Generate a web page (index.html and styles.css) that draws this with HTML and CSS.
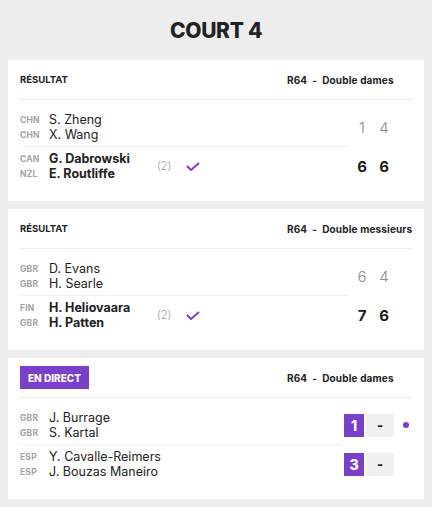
FILE: index.html
```html
<!DOCTYPE html>
<html lang="fr">
<head>
<meta charset="utf-8">
<title>Court 4</title>
<link rel="stylesheet" href="styles.css">
</head>
<body>
<main class="court">
  <h1 class="court-title">COURT 4</h1>

  <section class="match-card">
    <header class="card-head">
      <span class="status">RÉSULTAT</span>
      <span class="round">R64&nbsp;&nbsp;-&nbsp;&nbsp;Double dames</span>
    </header>
    <div class="team-row first">
      <div class="team">
        <div class="players">
          <div class="player"><span class="nat">CHN</span><span class="name">S. Zheng</span></div>
          <div class="player"><span class="nat">CHN</span><span class="name">X. Wang</span></div>
        </div>
      </div>
      <div class="scores"><span class="set">1</span><span class="set">4</span></div>
    </div>
    <div class="team-row winner">
      <div class="team">
        <div class="players">
          <div class="player"><span class="nat">CAN</span><span class="name">G. Dabrowski</span></div>
          <div class="player"><span class="nat">NZL</span><span class="name">E. Routliffe</span></div>
        </div>
        <span class="seed">(2)</span>
        <svg class="check" width="14" height="9" viewBox="0 0 14 9"><polyline points="1,4 5,8 13,1" fill="none" stroke="#7b40c9" stroke-width="2"/></svg>
      </div>
      <div class="scores"><span class="set">6</span><span class="set">6</span></div>
    </div>
  </section>

  <section class="match-card">
    <header class="card-head">
      <span class="status">RÉSULTAT</span>
      <span class="round">R64&nbsp;&nbsp;-&nbsp;&nbsp;Double messieurs</span>
    </header>
    <div class="team-row first">
      <div class="team">
        <div class="players">
          <div class="player"><span class="nat">GBR</span><span class="name">D. Evans</span></div>
          <div class="player"><span class="nat">GBR</span><span class="name">H. Searle</span></div>
        </div>
      </div>
      <div class="scores"><span class="set">6</span><span class="set">4</span></div>
    </div>
    <div class="team-row winner">
      <div class="team">
        <div class="players">
          <div class="player"><span class="nat">FIN</span><span class="name">H. Heliovaara</span></div>
          <div class="player"><span class="nat">GBR</span><span class="name">H. Patten</span></div>
        </div>
        <span class="seed">(2)</span>
        <svg class="check" width="14" height="9" viewBox="0 0 14 9"><polyline points="1,4 5,8 13,1" fill="none" stroke="#7b40c9" stroke-width="2"/></svg>
      </div>
      <div class="scores"><span class="set">7</span><span class="set">6</span></div>
    </div>
  </section>

  <section class="match-card live">
    <header class="card-head">
      <span class="status"><span class="live-badge">EN DIRECT</span></span>
      <span class="round">R64&nbsp;&nbsp;-&nbsp;&nbsp;Double dames</span>
    </header>
    <div class="team-row first">
      <div class="team">
        <div class="players">
          <div class="player"><span class="nat">GBR</span><span class="name">J. Burrage</span></div>
          <div class="player"><span class="nat">GBR</span><span class="name">S. Kartal</span></div>
        </div>
      </div>
      <div class="live-scores">
        <span class="box-set">1</span><span class="box-game">-</span><span class="serve-dot"></span>
      </div>
    </div>
    <div class="team-row">
      <div class="team">
        <div class="players">
          <div class="player"><span class="nat">ESP</span><span class="name">Y. Cavalle-Reimers</span></div>
          <div class="player"><span class="nat">ESP</span><span class="name">J. Bouzas Maneiro</span></div>
        </div>
      </div>
      <div class="live-scores">
        <span class="box-set">3</span><span class="box-game">-</span>
      </div>
    </div>
  </section>
</main>
</body>
</html>
```

FILE: styles.css
```css
* { box-sizing: border-box; }

body {
  margin: 0;
  background: #ededed;
  font-family: "Inter", "Noto Sans", sans-serif;
  color: #1f1f1f;
}

.court {
  padding: 0 8px 8px;
  display: flex;
  flex-direction: column;
  gap: 8px;
}

.court-title {
  margin: 18px 0 9px;
  text-align: center;
  font-size: 21px;
  line-height: 25px;
  font-weight: 800;
  letter-spacing: -0.3px;
  color: #222;
}

.match-card {
  background: #fff;
  padding: 8px 12px 20px;
  height: 141px;
}

.card-head {
  display: grid;
  grid-template-columns: 1fr 125px;
  align-items: center;
  height: 32px;
  padding-bottom: 8px;
  border-bottom: 1px solid #ececec;
}

.status {
  font-size: 9.5px;
  font-weight: 700;
  color: #222;
}

.round {
  font-size: 10px;
  font-weight: 700;
  letter-spacing: 0.15px;
  color: #222;
  white-space: nowrap;
}

.live-badge {
  display: inline-flex;
  align-items: center;
  height: 23px;
  padding: 0 8px;
  background: #7b40c9;
  color: #fff;
  font-size: 10px;
  font-weight: 800;
}

.team-row {
  display: flex;
}

.team {
  width: 329px;
  display: flex;
  align-items: center;
  padding-top: 4px;
}

.team-row.first .team {
  padding-top: 12px;
  padding-bottom: 4px;
  border-bottom: 1px solid #efefef;
}

.live .team { width: 321px; }

.players {
  width: 130px;
  flex: none;
}

.player {
  display: flex;
  align-items: center;
  height: 15px;
  white-space: nowrap;
}

.nat {
  width: 29px;
  flex: none;
  font-size: 8.5px;
  font-weight: 700;
  color: #a3a3a3;
  letter-spacing: 0.2px;
}

.name {
  font-size: 12.5px;
  font-weight: 400;
  color: #222;
}

.winner .name { font-weight: 700; }

.seed {
  margin-left: 7px;
  font-size: 11px;
  font-weight: 300;
  color: #9a9a9a;
}

.check {
  margin-left: 15px;
  display: block;
}

.scores {
  display: flex;
  align-items: center;
  padding-left: 2px;
  padding-top: 4px;
}

.team-row.first .scores {
  padding-top: 12px;
  padding-bottom: 5px;
}

.set {
  width: 22px;
  text-align: center;
  font-size: 15px;
  font-weight: 300;
  color: #8c8c8c;
}

.winner .set {
  font-weight: 700;
  color: #1a1a1a;
}

.live-scores {
  display: flex;
  align-items: center;
  margin-left: 3px;
  gap: 2px;
  padding-top: 4px;
}

.team-row.first .live-scores {
  padding-top: 12px;
  padding-bottom: 5px;
}

.box-set {
  width: 20px;
  height: 23px;
  display: flex;
  align-items: center;
  justify-content: center;
  background: #7b40c9;
  color: #fff;
  font-size: 14px;
  font-weight: 800;
}

.box-game {
  width: 28px;
  height: 23px;
  display: flex;
  align-items: center;
  justify-content: center;
  background: #f0f0f0;
  color: #222;
  font-size: 13px;
  font-weight: 800;
}

.serve-dot {
  width: 6px;
  height: 6px;
  margin-left: 7px;
  border-radius: 50%;
  background: #7b40c9;
}
```
